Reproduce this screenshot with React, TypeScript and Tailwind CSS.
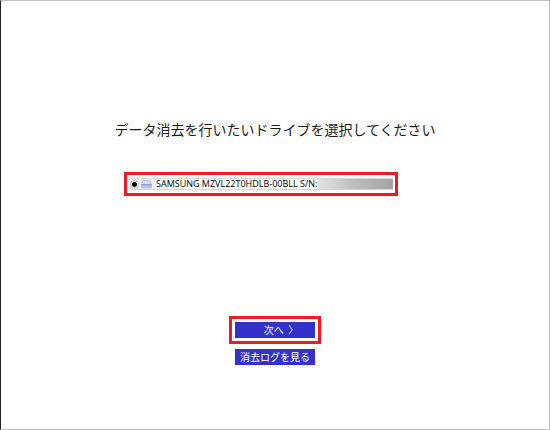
import { useState } from 'react';

function DriveIcon() {
  return (
    <svg viewBox="0 0 11 9" className="h-[9px] w-[11px] shrink-0" aria-hidden="true">
      <path d="M2 0.5h7l1.5 4h-10z" fill="#d5dcfa" stroke="#a9b3e0" strokeWidth="0.8" />
      <path d="M0.5 4.5h10v3.2h-10z" fill="#bcc5f3" stroke="#a3add9" strokeWidth="0.6" />
      <path d="M0.5 4.8h10" stroke="#7f8ac0" strokeWidth="0.8" />
      <path d="M0.5 8.2h10" stroke="#c4c8d8" strokeWidth="0.6" />
    </svg>
  );
}

export default function App() {
  const [drive, setDrive] = useState('samsung');

  return (
    <main className="flex min-h-screen flex-col items-center border border-[#c0c0c0] border-l-[#222222] bg-white font-['Noto_Sans_CJK_JP','Noto_Sans',sans-serif] text-[#1a1a1a]">
      <h1 className="mt-[118px] text-sm leading-5 font-normal">
        データ消去を行いたいドライブを選択してください
      </h1>

      <div className="mt-[33px] mr-7 w-[274px] border-3 border-[#ed1c24] px-[2px] py-[3px]">
        <label className="flex h-3 w-full items-center border-t border-b border-[#d6d6d6] bg-[#f0f0f0] pl-px font-['Open_Sans',sans-serif] text-[9px] leading-[10px] whitespace-nowrap">
          <input
            type="radio"
            name="drive"
            value="samsung"
            checked={drive === 'samsung'}
            onChange={() => setDrive('samsung')}
            className="h-[9px] w-[9px] shrink-0 appearance-none rounded-full border border-[#bbbbbb] bg-white checked:bg-[radial-gradient(circle,#000000_0_2px,#ffffff_3px)]"
          />
          <span className="mr-1 ml-[2px] flex">
            <DriveIcon />
          </span>
          <span className="bg-white text-black">SAMSUNG MZVL22T0HDLB-00BLL S/N:</span>
          <span className="h-[10px] flex-1 bg-linear-to-r from-[#e4e4e4] via-[#bcbcbc] to-[#a4a4a4]" />
        </label>
      </div>

      <div className="mt-[120px] border-3 border-[#ed1c24] p-[3px]">
        <button type="button" className="block h-4 w-20 bg-[#3330cc] pl-3 text-[10px] leading-4 text-white">
          次へ&nbsp; 〉
        </button>
      </div>
      <button type="button" className="mt-[5px] h-4 w-20 bg-[#3330cc] text-[10px] leading-4 text-white">
        消去ログを見る
      </button>
    </main>
  );
}
